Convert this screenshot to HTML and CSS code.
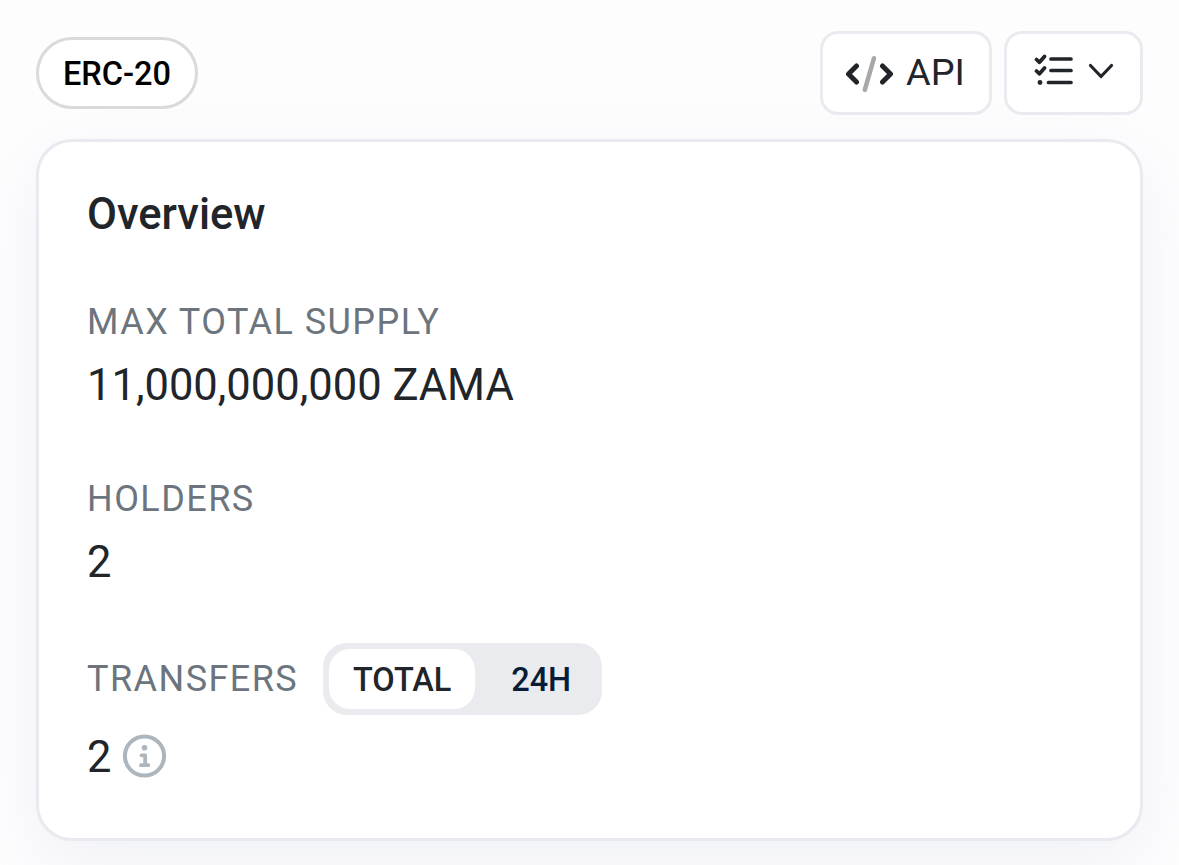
FILE: index.html
```html
<!DOCTYPE html>
<html lang="en">
<head>
    <meta charset="UTF-8">
    <meta name="viewport" content="width=device-width, initial-scale=1.0">
    <title>Token Overview</title>
    <link rel="stylesheet" href="styles.css">
</head>
<body>
    <div class="toolbar">
        <span class="badge">ERC-20</span>
        <div class="actions">
            <button class="btn btn-api">
                <svg class="icon-code" width="48" height="38" viewBox="0 0 48 38" fill="none" stroke="#212529" stroke-width="5" stroke-linecap="round" stroke-linejoin="round">
                    <path d="M11.5 11 3.500 19l8 8M37.5 11 45.500 19l-8 8"/>
                    <path stroke="#a6a8a9" stroke-width="4.5" d="M29 3.200 19.800 34.800"/>
                </svg>
                <span class="btn-text">API</span>
            </button>
            <button class="btn btn-list">
                <svg class="icon-list" width="40" height="32" viewBox="0 0 40 32" fill="none" stroke="#212529" stroke-width="3.700" stroke-linecap="round" stroke-linejoin="round">
                    <path d="M2.500 5.500 5.500 8.300 10.500 2.500M2.500 17 5.500 19.800 10.500 14M17 5H37M17 16.500H37M14.500 28.500H37"/>
                    <circle cx="6" cy="28.500" r="2.400" fill="#212529" stroke="none"/>
                </svg>
                <svg class="icon-chevron" width="26" height="16" viewBox="0 0 26 16" fill="none" stroke="#212529" stroke-width="3.2" stroke-linecap="round" stroke-linejoin="round">
                    <path d="M2.500 2.500 13 13.500 23.500 2.500"/>
                </svg>
            </button>
        </div>
    </div>

    <div class="card">
        <h3 class="card-title">Overview</h3>
        <div class="item">
            <h4 class="label">MAX TOTAL SUPPLY</h4>
            <div class="value">11,000,000,000 ZAMA</div>
        </div>
        <div class="item">
            <h4 class="label">HOLDERS</h4>
            <div class="value">2</div>
        </div>
        <div class="item item-transfers">
            <div class="label-row">
                <h4 class="label">TRANSFERS</h4>
                <div class="toggle">
                    <button class="tab active">TOTAL</button>
                    <button class="tab">24H</button>
                </div>
            </div>
            <div class="value value-row">
                <span>2</span>
                <svg class="icon-info" width="44" height="44" viewBox="0 0 44 44" fill="none" stroke="#adb5bd" stroke-linecap="round" stroke-linejoin="round">
                    <circle cx="21.500" cy="22" r="19.600" stroke-width="4"/>
                    <circle cx="21.500" cy="13.700" r="2.800" fill="#adb5bd" stroke="none"/>
                    <path stroke-width="3.800" d="M18.500 21.300H22.200V31M17.900 31.200H25.300"/>
                </svg>
            </div>
        </div>
    </div>
</body>
</html>
```

FILE: styles.css
```css
* {
    box-sizing: border-box;
}

body {
    margin: 0;
    height: 865px;
    padding: 31px 36px 0;
    overflow: hidden;
    background-color: #fdfdfe;
    color: #212529;
    font-family: Roboto, sans-serif;
}

button {
    margin: 0;
    border: none;
    color: inherit;
    font-family: inherit;
    cursor: pointer;
}

.toolbar {
    display: flex;
    justify-content: space-between;
    align-items: center;
    height: 84px;
}

.badge {
    width: 162px;
    height: 72px;
    border: 3px solid #d9dadb;
    border-radius: 36px;
    background-color: #fff;
    color: #000;
    font-size: 32.5px;
    font-weight: 500;
    line-height: 69px;
    text-align: center;
}

.actions {
    display: flex;
    gap: 12px;
}

.btn {
    display: flex;
    align-items: center;
    height: 84px;
    border: 3px solid #eaeaf0;
    border-radius: 18px;
    background-color: #fff;
}

.btn-api {
    width: 172px;
    padding: 1px 0 0 22px;
}

.btn-text {
    margin-left: 13px;
    font-size: 37.8px;
    line-height: 76px;
    padding-bottom: 3px;
}

.btn-list {
    width: 139px;
    padding: 0 0 5px 27px;
}

.icon-list {
    margin-bottom: 2px;
}

.icon-chevron {
    margin-left: 14px;
}

.card {
    height: 702px;
    margin-top: 24px;
    padding: 47px 48px 0;
    border: 3px solid #e9eaef;
    border-radius: 36px;
    background-color: #fff;
    box-shadow: 0 22px 68px rgba(189, 197, 214, 0.2);
}

.card-title {
    margin: 0 0 52px;
    font-size: 43.5px;
    font-weight: 500;
    line-height: 52px;
}

.item {
    margin-bottom: 51px;
}

.label {
    margin: 0;
    color: #6c757d;
    font-size: 36px;
    font-weight: 400;
    letter-spacing: 1.45px;
    line-height: 58px;
}

.value {
    margin-top: 2px;
    font-size: 43.5px;
    line-height: 66px;
}

.item-transfers {
    margin-top: -4px;
}

.label-row {
    display: flex;
    align-items: center;
}

.toggle {
    display: flex;
    width: 279px;
    height: 72px;
    margin-left: 25px;
    padding: 6px;
    border-radius: 24px;
    background-color: #eaebef;
}

.tab {
    width: 121px;
    padding: 2px 0 0 11px;
    border-radius: 21px;
    background-color: transparent;
    color: #081d35;
    font-size: 32.5px;
    font-weight: 500;
    line-height: 58px;
}

.tab.active {
    width: 146px;
    padding-left: 0;
    background-color: #fff;
    color: #212529;
}

.value-row {
    display: flex;
    align-items: center;
    gap: 12px;
    margin-top: 10px;
}

.icon-info {
    margin-bottom: 5px;
}
```
